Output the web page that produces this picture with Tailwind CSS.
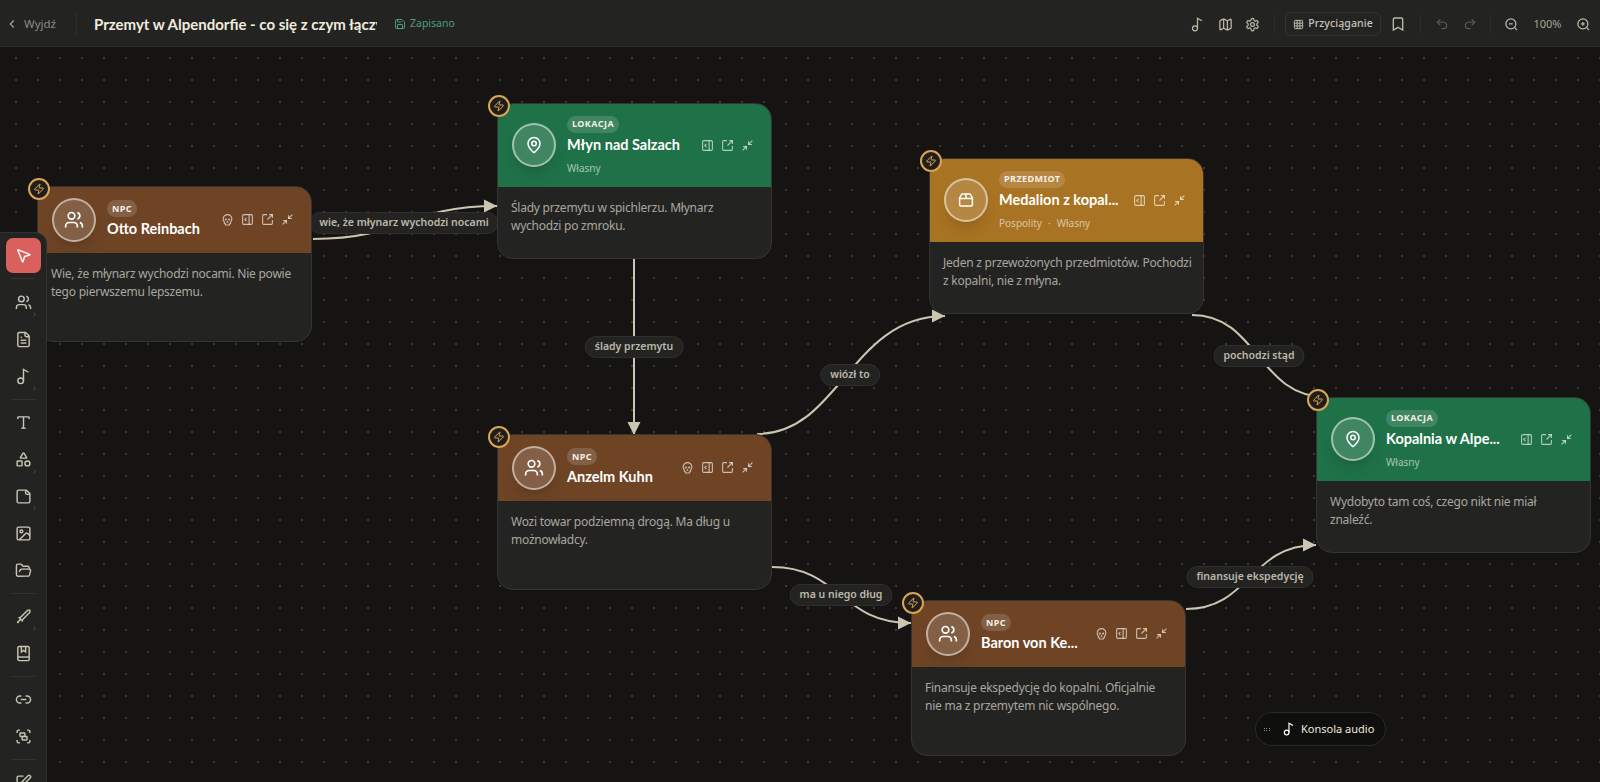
<!DOCTYPE html>
<html lang="pl" class="h-full">

<head>
  <meta charset="UTF-8" />
  <meta name="viewport" content="width=device-width, initial-scale=1.0" />
  <title>Przemyt w Alpendorfie</title>
  <script src="https://cdn.jsdelivr.net/npm/@tailwindcss/browser@4"></script>
</head>

<body class="h-full overflow-hidden bg-[#151413] font-['Noto_Sans',sans-serif] text-[#d8d4c6] flex flex-col">

  <!-- Icon sprite -->
  <svg class="hidden">
    <defs>
      <symbol id="users" viewBox="0 0 24 24"><path d="M16 21v-2a4 4 0 0 0-4-4H6a4 4 0 0 0-4 4v2"/><path d="M16 3.128a4 4 0 0 1 0 7.744"/><path d="M22 21v-2a4 4 0 0 0-3-3.87"/><circle cx="9" cy="7" r="4"/></symbol>
      <symbol id="pin" viewBox="0 0 24 24"><path d="M20 10c0 4.993-5.539 10.193-7.399 11.799a1 1 0 0 1-1.202 0C9.539 20.193 4 14.993 4 10a8 8 0 0 1 16 0"/><circle cx="12" cy="10" r="3"/></symbol>
      <symbol id="box" viewBox="0 0 24 24"><path d="M7.5 4h9a2 2 0 0 1 1.7 1L20.500 9.500V18a2 2 0 0 1-2 2h-13a2 2 0 0 1-2-2V9.500L5.800 5a2 2 0 0 1 1.700-1z"/><path d="M3.500 10h17"/><path d="M12 4v6"/></symbol>
      <symbol id="zap" viewBox="0 0 24 24"><path d="M4 14a1 1 0 0 1-.78-1.630l9.900-10.200a.5.5 0 0 1 .86.460l-1.920 6.020A1 1 0 0 0 13 10h7a1 1 0 0 1 .78 1.630l-9.900 10.200a.5.5 0 0 1-.86-.46l1.920-6.020A1 1 0 0 0 11 14z"/></symbol>
      <symbol id="skull" viewBox="0 0 24 24"><path d="m12.500 17-.5-1-.5 1h1z"/><path d="M15 22a1 1 0 0 0 1-1v-1a2 2 0 0 0 1.560-3.250 8 8 0 1 0-11.120 0A2 2 0 0 0 8 20v1a1 1 0 0 0 1 1z"/><circle cx="15" cy="12" r="1"/><circle cx="9" cy="12" r="1"/></symbol>
      <symbol id="panel" viewBox="0 0 24 24"><rect width="18" height="18" x="3" y="3" rx="2"/><path d="M15 3v18"/><path d="m10 15-3-3 3-3"/></symbol>
      <symbol id="open" viewBox="0 0 24 24"><path d="M21 13v6a2 2 0 0 1-2 2H5a2 2 0 0 1-2-2V5a2 2 0 0 1 2-2h6"/><path d="m21 3-9 9"/><path d="M15 3h6v6"/></symbol>
      <symbol id="min" viewBox="0 0 24 24"><path d="m14 10 7-7"/><path d="M20 10h-6V4"/><path d="m3 21 7-7"/><path d="M4 14h6v6"/></symbol>
      <symbol id="back" viewBox="0 0 24 24"><path d="m15 18-6-6 6-6"/></symbol>
      <symbol id="next" viewBox="0 0 24 24"><path d="m9 18 6-6-6-6"/></symbol>
      <symbol id="save" viewBox="0 0 24 24"><path d="M15.200 3a2 2 0 0 1 1.400.6l3.800 3.800a2 2 0 0 1 .6 1.400V19a2 2 0 0 1-2 2H5a2 2 0 0 1-2-2V5a2 2 0 0 1 2-2z"/><path d="M17 21v-7a1 1 0 0 0-1-1H8a1 1 0 0 0-1 1v7"/><path d="M7 3v4a1 1 0 0 0 1 1h7"/></symbol>
      <symbol id="music" viewBox="0 0 24 24"><circle cx="8" cy="18" r="4"/><path d="M12 18V2l7 4"/></symbol>
      <symbol id="map" viewBox="0 0 24 24"><path d="M14.106 5.553a2 2 0 0 0 1.788 0l3.659-1.830A1 1 0 0 1 21 4.619v12.764a1 1 0 0 1-.553.894l-4.553 2.277a2 2 0 0 1-1.788 0l-4.212-2.106a2 2 0 0 0-1.788 0l-3.659 1.830A1 1 0 0 1 3 19.381V6.618a1 1 0 0 1 .553-.894l4.553-2.277a2 2 0 0 1 1.788 0z"/><path d="M15 5.764v15"/><path d="M9 3.236v15"/></symbol>
      <symbol id="gear" viewBox="0 0 24 24"><path d="M12.220 2h-.44a2 2 0 0 0-2 2v.18a2 2 0 0 1-1 1.730l-.43.25a2 2 0 0 1-2 0l-.15-.08a2 2 0 0 0-2.730.73l-.22.38a2 2 0 0 0 .73 2.730l.15.1a2 2 0 0 1 1 1.720v.51a2 2 0 0 1-1 1.740l-.15.09a2 2 0 0 0-.73 2.730l.22.38a2 2 0 0 0 2.730.73l.15-.08a2 2 0 0 1 2 0l.43.25a2 2 0 0 1 1 1.730V20a2 2 0 0 0 2 2h.44a2 2 0 0 0 2-2v-.18a2 2 0 0 1 1-1.730l.43-.25a2 2 0 0 1 2 0l.15.08a2 2 0 0 0 2.730-.73l.22-.39a2 2 0 0 0-.73-2.730l-.15-.08a2 2 0 0 1-1-1.740v-.5a2 2 0 0 1 1-1.740l.15-.09a2 2 0 0 0 .73-2.730l-.22-.38a2 2 0 0 0-2.730-.73l-.15.08a2 2 0 0 1-2 0l-.43-.25a2 2 0 0 1-1-1.730V4a2 2 0 0 0-2-2z"/><circle cx="12" cy="12" r="3"/></symbol>
      <symbol id="grid" viewBox="0 0 24 24"><rect width="18" height="18" x="3" y="3" rx="2"/><path d="M3 9h18"/><path d="M3 15h18"/><path d="M9 3v18"/><path d="M15 3v18"/></symbol>
      <symbol id="bookmark" viewBox="0 0 24 24"><path d="m19 21-7-4-7 4V5a2 2 0 0 1 2-2h10a2 2 0 0 1 2 2v16z"/></symbol>
      <symbol id="undo" viewBox="0 0 24 24"><path d="M9 14 4 9l5-5"/><path d="M4 9h10.500a5.500 5.500 0 0 1 5.500 5.500a5.500 5.500 0 0 1-5.500 5.500H11"/></symbol>
      <symbol id="redo" viewBox="0 0 24 24"><path d="m15 14 5-5-5-5"/><path d="M20 9H9.500A5.500 5.500 0 0 0 4 14.500A5.500 5.500 0 0 0 9.500 20H13"/></symbol>
      <symbol id="zoomout" viewBox="0 0 24 24"><circle cx="11" cy="11" r="8"/><path d="m21 21-4.350-4.350"/><path d="M8 11h6"/></symbol>
      <symbol id="zoomin" viewBox="0 0 24 24"><circle cx="11" cy="11" r="8"/><path d="m21 21-4.350-4.350"/><path d="M8 11h6"/><path d="M11 8v6"/></symbol>
      <symbol id="pointer" viewBox="0 0 24 24"><path d="M4.037 4.688a.495.495 0 0 1 .651-.651l16 6.500a.5.5 0 0 1-.063.947l-6.124 1.580a2 2 0 0 0-1.438 1.435l-1.579 6.126a.5.5 0 0 1-.947.063z"/></symbol>
      <symbol id="file" viewBox="0 0 24 24"><path d="M15 2H6a2 2 0 0 0-2 2v16a2 2 0 0 0 2 2h12a2 2 0 0 0 2-2V7Z"/><path d="M14 2v4a2 2 0 0 0 2 2h4"/><path d="M10 9H8"/><path d="M16 13H8"/><path d="M16 17H8"/></symbol>
      <symbol id="type" viewBox="0 0 24 24"><path d="M12 4v16"/><path d="M4 7V5a1 1 0 0 1 1-1h14a1 1 0 0 1 1 1v2"/><path d="M9 20h6"/></symbol>
      <symbol id="shapes" viewBox="0 0 24 24"><path d="M8.300 10a.7.7 0 0 1-.626-1.079L11.400 3a.7.7 0 0 1 1.198-.043L16.300 8.900a.7.7 0 0 1-.572 1.100Z"/><rect x="3" y="14" width="7" height="7" rx="1"/><circle cx="17.500" cy="17.500" r="3.500"/></symbol>
      <symbol id="note" viewBox="0 0 24 24"><path d="M16 3H5a2 2 0 0 0-2 2v14a2 2 0 0 0 2 2h14a2 2 0 0 0 2-2V8Z"/><path d="M15 3v4a2 2 0 0 0 2 2h4"/></symbol>
      <symbol id="image" viewBox="0 0 24 24"><rect width="18" height="18" x="3" y="3" rx="2"/><circle cx="9" cy="9" r="2"/><path d="m21 15-3.086-3.086a2 2 0 0 0-2.828 0L6 21"/></symbol>
      <symbol id="folder" viewBox="0 0 24 24"><path d="m6 14 1.500-2.900A2 2 0 0 1 9.240 10H20a2 2 0 0 1 1.940 2.500l-1.540 6a2 2 0 0 1-1.950 1.500H4a2 2 0 0 1-2-2V5a2 2 0 0 1 2-2h3.900a2 2 0 0 1 1.690.9l.81 1.200a2 2 0 0 0 1.670.9H18a2 2 0 0 1 2 2v2"/></symbol>
      <symbol id="sword" viewBox="0 0 24 24"><path d="m11 19-6-6"/><path d="m5 21-2-2"/><path d="m8 16-4 4"/><path d="M9.500 17.500 21 6V3h-3L6.500 14.500"/></symbol>
      <symbol id="book" viewBox="0 0 24 24"><rect width="16" height="20" x="4" y="2" rx="2"/><path d="M9 2v8l3-2.500 3 2.500V2"/><path d="M4 17h16"/></symbol>
      <symbol id="link" viewBox="0 0 24 24"><path d="M9 17H7A5 5 0 0 1 7 7h2"/><path d="M15 7h2a5 5 0 1 1 0 10h-2"/><path d="M8 12h8"/></symbol>
      <symbol id="group" viewBox="0 0 24 24"><path d="M3 7V5c0-1.100.9-2 2-2h2"/><path d="M17 3h2c1.100 0 2 .9 2 2v2"/><path d="M21 17v2c0 1.100-.9 2-2 2h-2"/><path d="M7 21H5c-1.100 0-2-.9-2-2v-2"/><rect width="7" height="5" x="7" y="7" rx="1"/><rect width="7" height="5" x="10" y="12" rx="1"/></symbol>
      <symbol id="pen" viewBox="0 0 24 24"><path d="M12 3H5a2 2 0 0 0-2 2v14a2 2 0 0 0 2 2h14a2 2 0 0 0 2-2v-7"/><path d="M18.375 2.625a1 1 0 0 1 3 3l-9.013 9.014a2 2 0 0 1-.853.505l-2.873.84a.5.5 0 0 1-.62-.62l.84-2.873a2 2 0 0 1 .506-.852z"/></symbol>
    </defs>
  </svg>

  <!-- Top bar -->
  <header class="h-[47px] shrink-0 flex items-center bg-[#232322] border-b border-[#323130] pt-[2px] pr-[9px]">
    <svg class="w-[14px] h-[14px] ml-[5px] text-[#a8a496] fill-none stroke-current stroke-2"><use href="#back"/></svg>
    <span class="ml-[5px] w-[33px] text-[11.5px] text-[#8f8c80]">Wyjdź</span>
    <div class="ml-[19px] w-px h-[24px] bg-[#2e2d2b]"></div>
    <div class="ml-[17px] w-[283px] overflow-hidden whitespace-nowrap font-['Lato',sans-serif] text-[15px] font-bold text-[#f0ecdf]">Przemyt w Alpendorfie - co się z czym łączy</div>
    <svg class="ml-[17px] w-[12px] h-[12px] text-[#4f9d75] fill-none stroke-current stroke-2"><use href="#save"/></svg>
    <span class="ml-[4px] text-[10.5px] text-[#4f9d75]">Zapisano</span>

    <svg class="ml-auto w-[15px] h-[15px] text-[#bdb9aa] fill-none stroke-current stroke-2"><use href="#music"/></svg>
    <svg class="ml-[13px] w-[15px] h-[15px] text-[#bdb9aa] fill-none stroke-current stroke-2"><use href="#map"/></svg>
    <svg class="ml-[12px] w-[15px] h-[15px] text-[#bdb9aa] fill-none stroke-current stroke-2"><use href="#gear"/></svg>
    <div class="ml-[14px] w-px h-[20px] bg-[#2e2d2b]"></div>
    <button class="ml-[10px] w-[96px] h-[24px] flex items-center justify-center gap-[4px] rounded-[6px] border border-[#343331] text-[10.5px] font-medium tracking-[0.01em] text-[#c9c5b6]">
      <svg class="w-[11px] h-[11px] fill-none stroke-current stroke-2"><use href="#grid"/></svg>
      Przyciąganie
    </button>
    <svg class="ml-[9px] w-4 h-[18px] text-[#bdb9aa] fill-none stroke-current stroke-2"><use href="#bookmark"/></svg>
    <div class="ml-[14px] w-px h-[20px] bg-[#2e2d2b]"></div>
    <svg class="ml-[14px] w-[14px] h-[14px] text-[#5e5c54] fill-none stroke-current stroke-2"><use href="#undo"/></svg>
    <svg class="ml-[14px] w-[14px] h-[14px] text-[#5e5c54] fill-none stroke-current stroke-2"><use href="#redo"/></svg>
    <div class="ml-[13px] w-px h-[20px] bg-[#2e2d2b]"></div>
    <svg class="ml-[13px] w-[15px] h-[15px] text-[#bdb9aa] fill-none stroke-current stroke-2"><use href="#zoomout"/></svg>
    <span class="w-[57px] text-center text-[11px] text-[#a8a496]">100%</span>
    <svg class="w-[15px] h-[15px] text-[#bdb9aa] fill-none stroke-current stroke-2"><use href="#zoomin"/></svg>
  </header>

  <!-- Canvas -->
  <main class="relative flex-1 overflow-hidden bg-[radial-gradient(circle,#3a3934_1px,transparent_1px)] bg-size-[22px_22px] bg-position-[5px_0px]">

    <!-- Edges, in page coordinates -->
    <svg class="absolute inset-0 w-[1600px] h-[735px] fill-none stroke-[#cbc6b2] stroke-2" viewBox="0 47 1600 735">
      <defs>
        <marker id="arrow" markerUnits="userSpaceOnUse" markerWidth="14" markerHeight="14" refX="13" refY="7" orient="auto">
          <path d="M0 0.500 13 7 0 13.500z" class="fill-[#cbc6b2] stroke-none"/>
        </marker>
      </defs>
      <path d="M313 239C405 239 405 206 497 206" marker-end="url(#arrow)"/>
      <path d="M634 259V435" marker-end="url(#arrow)"/>
      <path d="M757 434C840 434 850 316 945 316" marker-end="url(#arrow)"/>
      <path d="M1192 315C1258 315 1258 397 1326 397"/>
      <path d="M772 567C840 567 840 623 911 623" marker-end="url(#arrow)"/>
      <path d="M1186 609C1250 609 1250 545 1316 545" marker-end="url(#arrow)"/>
    </svg>

    <!-- Edge labels -->
    <span class="absolute left-[404px] top-[176px] -translate-x-1/2 -translate-y-1/2 h-[22px] px-[9px] flex items-center whitespace-nowrap rounded-[11px] bg-[#232322] border border-[#302f2d] text-[10.5px] font-semibold text-[#bdb9aa]">wie, że młynarz wychodzi nocami</span>
    <span class="absolute left-[634px] top-[300px] -translate-x-1/2 -translate-y-1/2 h-[22px] px-[9px] flex items-center whitespace-nowrap rounded-[11px] bg-[#232322] border border-[#302f2d] text-[10.5px] font-semibold text-[#bdb9aa]">ślady przemytu</span>
    <span class="absolute left-[850px] top-[328px] -translate-x-1/2 -translate-y-1/2 h-[22px] px-[9px] flex items-center whitespace-nowrap rounded-[11px] bg-[#232322] border border-[#302f2d] text-[10.5px] font-semibold text-[#bdb9aa]">wiózł to</span>
    <span class="absolute left-[1259px] top-[309px] -translate-x-1/2 -translate-y-1/2 h-[22px] px-[9px] flex items-center whitespace-nowrap rounded-[11px] bg-[#232322] border border-[#302f2d] text-[10.5px] font-semibold text-[#bdb9aa]">pochodzi stąd</span>
    <span class="absolute left-[841px] top-[548px] -translate-x-1/2 -translate-y-1/2 h-[22px] px-[9px] flex items-center whitespace-nowrap rounded-[11px] bg-[#232322] border border-[#302f2d] text-[10.5px] font-semibold text-[#bdb9aa]">ma u niego dług</span>
    <span class="absolute left-[1250px] top-[530px] -translate-x-1/2 -translate-y-1/2 h-[22px] px-[9px] flex items-center whitespace-nowrap rounded-[11px] bg-[#232322] border border-[#302f2d] text-[10.5px] font-semibold text-[#bdb9aa]">finansuje ekspedycję</span>

    <!-- Otto Reinbach -->
    <article class="absolute left-[37px] top-[139px] w-[275px] h-[156px]">
      <div class="h-full flex flex-col overflow-hidden rounded-[16px] border border-[#353432] bg-[#232322]">
        <div class="h-[67px] shrink-0 -mx-px -mt-px flex items-center gap-[11px] pl-[15px] pr-[18px] bg-[#6e4425]">
          <div class="w-[44px] h-[44px] shrink-0 rounded-full border-2 border-white/50 bg-white/15 shadow-lg flex items-center justify-center text-white"><svg class="w-5 h-5 fill-none stroke-current stroke-2"><use href="#users"/></svg></div>
          <div class="flex-1 min-w-0">
            <span class="flex w-fit items-center h-[17px] px-[5px] rounded-full bg-white/15 text-[9px] font-bold tracking-[0.05em] text-[#f5efe4]">NPC</span>
            <div class="mt-[2px] font-['Lato',sans-serif] text-[14.5px] leading-[20px] font-bold text-white whitespace-nowrap">Otto Reinbach</div>
          </div>
          <div class="flex items-center gap-[7px] text-white/65">
            <svg class="w-[13px] h-[13px] fill-none stroke-current stroke-2"><use href="#skull"/></svg>
            <svg class="w-[13px] h-[13px] fill-none stroke-current stroke-2"><use href="#panel"/></svg>
            <svg class="w-[13px] h-[13px] fill-none stroke-current stroke-2"><use href="#open"/></svg>
            <svg class="w-[13px] h-[13px] fill-none stroke-current stroke-2"><use href="#min"/></svg>
          </div>
        </div>
        <p class="px-[13px] pt-[11.5px] text-[12px] tracking-[-0.02em] leading-[18.6px] text-[#aaa79e]">Wie, że młynarz wychodzi nocami. Nie powie tego pierwszemu lepszemu.</p>
      </div>
      <div class="absolute -left-[9px] -top-[8px] w-[22px] h-[22px] rounded-full border-2 border-[#d9a556] bg-[#1f1e1c] flex items-center justify-center text-[#d9a556]"><svg class="w-3 h-3 fill-none stroke-current stroke-2"><use href="#zap"/></svg></div>
    </article>

    <!-- Młyn nad Salzach -->
    <article class="absolute left-[497px] top-[56px] w-[275px] h-[156px]">
      <div class="h-full flex flex-col overflow-hidden rounded-[16px] border border-[#353432] bg-[#232322]">
        <div class="h-[84px] shrink-0 -mx-px -mt-px flex items-center gap-[11px] pl-[15px] pr-[18px] bg-[#1f7148]">
          <div class="w-[44px] h-[44px] shrink-0 rounded-full border-2 border-white/50 bg-white/15 shadow-lg flex items-center justify-center text-white"><svg class="w-[18px] h-[18px] fill-none stroke-current stroke-2"><use href="#pin"/></svg></div>
          <div class="flex-1 min-w-0">
            <span class="flex w-fit items-center h-[17px] px-[5px] rounded-full bg-white/15 text-[9px] font-bold tracking-[0.05em] text-[#f5efe4]">LOKACJA</span>
            <div class="mt-[2px] font-['Lato',sans-serif] text-[14.5px] leading-[20px] font-bold text-white whitespace-nowrap">Młyn nad Salzach</div>
            <div class="mt-[6px] text-[10px] leading-[14px] text-white/60">Własny</div>
          </div>
          <div class="flex items-center gap-[7px] text-white/65">
            <svg class="w-[13px] h-[13px] fill-none stroke-current stroke-2"><use href="#panel"/></svg>
            <svg class="w-[13px] h-[13px] fill-none stroke-current stroke-2"><use href="#open"/></svg>
            <svg class="w-[13px] h-[13px] fill-none stroke-current stroke-2"><use href="#min"/></svg>
          </div>
        </div>
        <p class="px-[13px] pt-[11.5px] text-[12px] tracking-[-0.02em] leading-[18.6px] text-[#aaa79e]">Ślady przemytu w spichlerzu. Młynarz wychodzi po zmroku.</p>
      </div>
      <div class="absolute -left-[9px] -top-[8px] w-[22px] h-[22px] rounded-full border-2 border-[#d9a556] bg-[#1f1e1c] flex items-center justify-center text-[#d9a556]"><svg class="w-3 h-3 fill-none stroke-current stroke-2"><use href="#zap"/></svg></div>
    </article>

    <!-- Medalion -->
    <article class="absolute left-[929px] top-[111px] w-[275px] h-[156px]">
      <div class="h-full flex flex-col overflow-hidden rounded-[16px] border border-[#353432] bg-[#232322]">
        <div class="h-[84px] shrink-0 -mx-px -mt-px flex items-center gap-[11px] pl-[15px] pr-[18px] bg-[#a87322]">
          <div class="w-[44px] h-[44px] shrink-0 rounded-full border-2 border-white/50 bg-white/15 shadow-lg flex items-center justify-center text-white"><svg class="w-[18px] h-[18px] fill-none stroke-current stroke-2"><use href="#box"/></svg></div>
          <div class="flex-1 min-w-0">
            <span class="flex w-fit items-center h-[17px] px-[5px] rounded-full bg-white/15 text-[9px] font-bold tracking-[0.05em] text-[#f5efe4]">PRZEDMIOT</span>
            <div class="mt-[2px] font-['Lato',sans-serif] text-[14.5px] leading-[20px] font-bold text-white whitespace-nowrap">Medalion z kopal...</div>
            <div class="mt-[6px] flex items-center gap-[6px] text-[10px] leading-[14px] text-white/60"><span>Pospolity</span><span>·</span><span>Własny</span></div>
          </div>
          <div class="flex items-center gap-[7px] text-white/65">
            <svg class="w-[13px] h-[13px] fill-none stroke-current stroke-2"><use href="#panel"/></svg>
            <svg class="w-[13px] h-[13px] fill-none stroke-current stroke-2"><use href="#open"/></svg>
            <svg class="w-[13px] h-[13px] fill-none stroke-current stroke-2"><use href="#min"/></svg>
          </div>
        </div>
        <p class="pl-[13px] pr-[8px] pt-[11.5px] text-[12px] tracking-[-0.02em] leading-[18.6px] text-[#aaa79e]">Jeden z przewożonych przedmiotów. Pochodzi z kopalni, nie z młyna.</p>
      </div>
      <div class="absolute -left-[9px] -top-[8px] w-[22px] h-[22px] rounded-full border-2 border-[#d9a556] bg-[#1f1e1c] flex items-center justify-center text-[#d9a556]"><svg class="w-3 h-3 fill-none stroke-current stroke-2"><use href="#zap"/></svg></div>
    </article>

    <!-- Anzelm Kuhn -->
    <article class="absolute left-[497px] top-[387px] w-[275px] h-[156px]">
      <div class="h-full flex flex-col overflow-hidden rounded-[16px] border border-[#353432] bg-[#232322]">
        <div class="h-[67px] shrink-0 -mx-px -mt-px flex items-center gap-[11px] pl-[15px] pr-[18px] bg-[#6e4425]">
          <div class="w-[44px] h-[44px] shrink-0 rounded-full border-2 border-white/50 bg-white/15 shadow-lg flex items-center justify-center text-white"><svg class="w-5 h-5 fill-none stroke-current stroke-2"><use href="#users"/></svg></div>
          <div class="flex-1 min-w-0">
            <span class="flex w-fit items-center h-[17px] px-[5px] rounded-full bg-white/15 text-[9px] font-bold tracking-[0.05em] text-[#f5efe4]">NPC</span>
            <div class="mt-[2px] font-['Lato',sans-serif] text-[14.5px] leading-[20px] font-bold text-white whitespace-nowrap">Anzelm Kuhn</div>
          </div>
          <div class="flex items-center gap-[7px] text-white/65">
            <svg class="w-[13px] h-[13px] fill-none stroke-current stroke-2"><use href="#skull"/></svg>
            <svg class="w-[13px] h-[13px] fill-none stroke-current stroke-2"><use href="#panel"/></svg>
            <svg class="w-[13px] h-[13px] fill-none stroke-current stroke-2"><use href="#open"/></svg>
            <svg class="w-[13px] h-[13px] fill-none stroke-current stroke-2"><use href="#min"/></svg>
          </div>
        </div>
        <p class="px-[13px] pt-[11.5px] text-[12px] tracking-[-0.02em] leading-[18.6px] text-[#aaa79e]">Wozi towar podziemną drogą. Ma dług u możnowładcy.</p>
      </div>
      <div class="absolute -left-[9px] -top-[8px] w-[22px] h-[22px] rounded-full border-2 border-[#d9a556] bg-[#1f1e1c] flex items-center justify-center text-[#d9a556]"><svg class="w-3 h-3 fill-none stroke-current stroke-2"><use href="#zap"/></svg></div>
    </article>

    <!-- Kopalnia -->
    <article class="absolute left-[1316px] top-[350px] w-[275px] h-[156px]">
      <div class="h-full flex flex-col overflow-hidden rounded-[16px] border border-[#353432] bg-[#232322]">
        <div class="h-[84px] shrink-0 -mx-px -mt-px flex items-center gap-[11px] pl-[15px] pr-[18px] bg-[#1f7148]">
          <div class="w-[44px] h-[44px] shrink-0 rounded-full border-2 border-white/50 bg-white/15 shadow-lg flex items-center justify-center text-white"><svg class="w-[18px] h-[18px] fill-none stroke-current stroke-2"><use href="#pin"/></svg></div>
          <div class="flex-1 min-w-0">
            <span class="flex w-fit items-center h-[17px] px-[5px] rounded-full bg-white/15 text-[9px] font-bold tracking-[0.05em] text-[#f5efe4]">LOKACJA</span>
            <div class="mt-[2px] font-['Lato',sans-serif] text-[14.5px] leading-[20px] font-bold text-white whitespace-nowrap">Kopalnia w Alpe...</div>
            <div class="mt-[6px] text-[10px] leading-[14px] text-white/60">Własny</div>
          </div>
          <div class="flex items-center gap-[7px] text-white/65">
            <svg class="w-[13px] h-[13px] fill-none stroke-current stroke-2"><use href="#panel"/></svg>
            <svg class="w-[13px] h-[13px] fill-none stroke-current stroke-2"><use href="#open"/></svg>
            <svg class="w-[13px] h-[13px] fill-none stroke-current stroke-2"><use href="#min"/></svg>
          </div>
        </div>
        <p class="px-[13px] pt-[11.5px] text-[12px] tracking-[-0.02em] leading-[18.6px] text-[#aaa79e]">Wydobyto tam coś, czego nikt nie miał znaleźć.</p>
      </div>
      <div class="absolute -left-[9px] -top-[8px] w-[22px] h-[22px] rounded-full border-2 border-[#d9a556] bg-[#1f1e1c] flex items-center justify-center text-[#d9a556]"><svg class="w-3 h-3 fill-none stroke-current stroke-2"><use href="#zap"/></svg></div>
    </article>

    <!-- Baron -->
    <article class="absolute left-[911px] top-[553px] w-[275px] h-[156px]">
      <div class="h-full flex flex-col overflow-hidden rounded-[16px] border border-[#353432] bg-[#232322]">
        <div class="h-[67px] shrink-0 -mx-px -mt-px flex items-center gap-[11px] pl-[15px] pr-[18px] bg-[#6e4425]">
          <div class="w-[44px] h-[44px] shrink-0 rounded-full border-2 border-white/50 bg-white/15 shadow-lg flex items-center justify-center text-white"><svg class="w-5 h-5 fill-none stroke-current stroke-2"><use href="#users"/></svg></div>
          <div class="flex-1 min-w-0">
            <span class="flex w-fit items-center h-[17px] px-[5px] rounded-full bg-white/15 text-[9px] font-bold tracking-[0.05em] text-[#f5efe4]">NPC</span>
            <div class="mt-[2px] font-['Lato',sans-serif] text-[14.5px] leading-[20px] font-bold text-white whitespace-nowrap">Baron von Ke...</div>
          </div>
          <div class="flex items-center gap-[7px] text-white/65">
            <svg class="w-[13px] h-[13px] fill-none stroke-current stroke-2"><use href="#skull"/></svg>
            <svg class="w-[13px] h-[13px] fill-none stroke-current stroke-2"><use href="#panel"/></svg>
            <svg class="w-[13px] h-[13px] fill-none stroke-current stroke-2"><use href="#open"/></svg>
            <svg class="w-[13px] h-[13px] fill-none stroke-current stroke-2"><use href="#min"/></svg>
          </div>
        </div>
        <p class="px-[13px] pt-[11.5px] text-[12px] tracking-[-0.02em] leading-[18.6px] text-[#aaa79e]">Finansuje ekspedycję do kopalni. Oficjalnie nie ma z przemytem nic wspólnego.</p>
      </div>
      <div class="absolute -left-[9px] -top-[8px] w-[22px] h-[22px] rounded-full border-2 border-[#d9a556] bg-[#1f1e1c] flex items-center justify-center text-[#d9a556]"><svg class="w-3 h-3 fill-none stroke-current stroke-2"><use href="#zap"/></svg></div>
    </article>

    <!-- Audio console -->
    <div class="absolute left-[1255px] top-[665px] w-[131px] h-[34px] flex items-center rounded-full bg-[#0f0f0e] border border-[#2a2a28] pl-[8px]">
      <div class="w-[6px] grid grid-cols-3 gap-px">
        <i class="w-px h-px bg-[#8a877b]"></i><i class="w-px h-px bg-[#8a877b]"></i><i class="w-px h-px bg-[#8a877b]"></i>
        <i class="w-px h-px bg-[#8a877b]"></i><i class="w-px h-px bg-[#8a877b]"></i><i class="w-px h-px bg-[#8a877b]"></i>
      </div>
      <svg class="ml-[12px] w-[14px] h-[14px] text-white fill-none stroke-current stroke-2"><use href="#music"/></svg>
      <span class="ml-[5px] text-[11px] text-[#ece8dc] whitespace-nowrap">Konsola audio</span>
    </div>

    <!-- Left toolbar -->
    <nav class="absolute left-0 top-[185px] bottom-0 w-[47px] flex flex-col items-center pt-[5px] bg-[#232322] border-r border-t border-[#323130] rounded-tr-[12px] overflow-hidden text-[#c9c5b6]">
      <button class="w-[35px] h-[35px] shrink-0 rounded-[7px] bg-[#d9605c] flex items-center justify-center text-white"><svg class="w-[17px] h-[17px] fill-none stroke-current stroke-2"><use href="#pointer"/></svg></button>
      <div class="w-[24px] h-px shrink-0 my-[5px] bg-[#34332f]"></div>
      <button class="relative w-full h-[37px] shrink-0 flex items-center justify-center"><svg class="w-[17px] h-[17px] fill-none stroke-current stroke-2"><use href="#users"/></svg><svg class="absolute right-[8px] bottom-[3px] w-[7px] h-[7px] text-[#6c6a61] fill-none stroke-current stroke-2"><use href="#next"/></svg></button>
      <button class="relative w-full h-[37px] shrink-0 flex items-center justify-center"><svg class="w-[17px] h-[17px] fill-none stroke-current stroke-2"><use href="#file"/></svg></button>
      <button class="relative w-full h-[37px] shrink-0 flex items-center justify-center"><svg class="w-[17px] h-[17px] fill-none stroke-current stroke-2"><use href="#music"/></svg><svg class="absolute right-[8px] bottom-[3px] w-[7px] h-[7px] text-[#6c6a61] fill-none stroke-current stroke-2"><use href="#next"/></svg></button>
      <div class="w-[24px] h-px shrink-0 my-[4px] bg-[#34332f]"></div>
      <button class="relative w-full h-[37px] shrink-0 flex items-center justify-center"><svg class="w-[17px] h-[17px] fill-none stroke-current stroke-2"><use href="#type"/></svg></button>
      <button class="relative w-full h-[37px] shrink-0 flex items-center justify-center"><svg class="w-[17px] h-[17px] fill-none stroke-current stroke-2"><use href="#shapes"/></svg><svg class="absolute right-[8px] bottom-[3px] w-[7px] h-[7px] text-[#6c6a61] fill-none stroke-current stroke-2"><use href="#next"/></svg></button>
      <button class="relative w-full h-[37px] shrink-0 flex items-center justify-center"><svg class="w-[17px] h-[17px] fill-none stroke-current stroke-2"><use href="#note"/></svg><svg class="absolute right-[8px] bottom-[3px] w-[7px] h-[7px] text-[#6c6a61] fill-none stroke-current stroke-2"><use href="#next"/></svg></button>
      <button class="relative w-full h-[37px] shrink-0 flex items-center justify-center"><svg class="w-[17px] h-[17px] fill-none stroke-current stroke-2"><use href="#image"/></svg></button>
      <button class="relative w-full h-[37px] shrink-0 flex items-center justify-center"><svg class="w-[17px] h-[17px] fill-none stroke-current stroke-2"><use href="#folder"/></svg></button>
      <div class="w-[24px] h-px shrink-0 my-[4px] bg-[#34332f]"></div>
      <button class="relative w-full h-[37px] shrink-0 flex items-center justify-center"><svg class="w-[17px] h-[17px] fill-none stroke-current stroke-2"><use href="#sword"/></svg><svg class="absolute right-[8px] bottom-[3px] w-[7px] h-[7px] text-[#6c6a61] fill-none stroke-current stroke-2"><use href="#next"/></svg></button>
      <button class="relative w-full h-[37px] shrink-0 flex items-center justify-center"><svg class="w-[17px] h-[17px] fill-none stroke-current stroke-2"><use href="#book"/></svg></button>
      <div class="w-[24px] h-px shrink-0 my-[4px] bg-[#34332f]"></div>
      <button class="relative w-full h-[37px] shrink-0 flex items-center justify-center"><svg class="w-[17px] h-[17px] fill-none stroke-current stroke-2"><use href="#link"/></svg></button>
      <button class="relative w-full h-[37px] shrink-0 flex items-center justify-center"><svg class="w-[17px] h-[17px] fill-none stroke-current stroke-2"><use href="#group"/></svg></button>
      <div class="w-[24px] h-px shrink-0 my-[4px] bg-[#34332f]"></div>
      <button class="relative w-full h-[37px] shrink-0 flex items-center justify-center"><svg class="w-[17px] h-[17px] fill-none stroke-current stroke-2"><use href="#pen"/></svg></button>
    </nav>
  </main>
</body>

</html>
